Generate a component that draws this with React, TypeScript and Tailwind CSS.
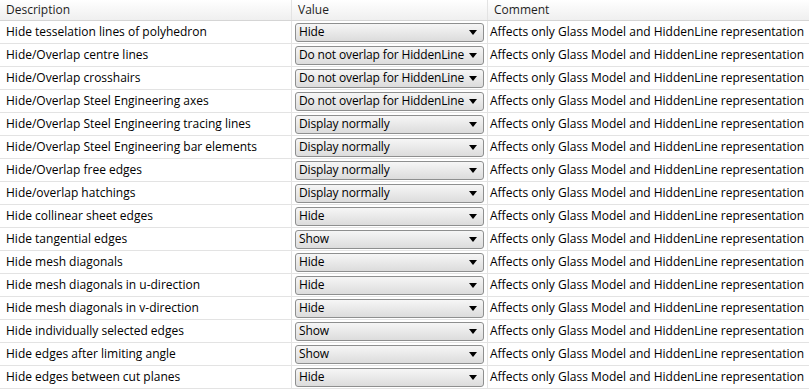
const rows: [string, string][] = [
  ["Hide tesselation lines of polyhedron", "Hide"],
  ["Hide/Overlap centre lines", "Do not overlap for HiddenLine"],
  ["Hide/Overlap crosshairs", "Do not overlap for HiddenLine"],
  ["Hide/Overlap Steel Engineering axes", "Do not overlap for HiddenLine"],
  ["Hide/Overlap Steel Engineering tracing lines", "Display normally"],
  ["Hide/Overlap Steel Engineering bar elements", "Display normally"],
  ["Hide/Overlap free edges", "Display normally"],
  ["Hide/overlap hatchings", "Display normally"],
  ["Hide collinear sheet edges", "Hide"],
  ["Hide tangential edges", "Show"],
  ["Hide mesh diagonals", "Hide"],
  ["Hide mesh diagonals in u-direction", "Hide"],
  ["Hide mesh diagonals in v-direction", "Hide"],
  ["Hide individually selected edges", "Show"],
  ["Hide edges after limiting angle", "Show"],
  ["Hide edges between cut planes", "Hide"],
];

const comment = "Affects only Glass Model and HiddenLine representation";

function Dropdown({ value }: { value: string }) {
  return (
    <div className="flex h-[19px] w-[189px] items-center justify-between rounded-[3px] border border-[#8e8f8f] bg-gradient-to-b from-[#f6f6f6] to-[#dcdcdc] pl-[3px] pr-[6px]">
      <span className="leading-none tracking-[-0.15px]">{value}</span>
      <svg width="8" height="5" viewBox="0 0 8 5" className="shrink-0">
        <path d="M0 0h8L4 5z" fill="#000" />
      </svg>
    </div>
  );
}

export default function App() {
  return (
    <div
      className="h-[389px] w-[809px] overflow-hidden bg-white text-[12px] text-black"
      style={{ fontFamily: '"Open Sans", "Noto Sans", sans-serif' }}
    >
      <div className="grid h-[21px] grid-cols-[292px_196px_1fr] border-b border-[#d5d5d5] bg-gradient-to-b from-white to-[#efefef] text-[#1e1e1e]">
        <div className="flex items-center border-r border-[#e3e3e3] pl-[6px]">Description</div>
        <div className="flex items-center border-r border-[#e3e3e3] pl-[6px]">Value</div>
        <div className="flex items-center pl-[6px]">Comment</div>
      </div>
      {rows.map(([desc, val]) => (
        <div key={desc} className="grid h-[23px] grid-cols-[292px_196px_1fr] border-b border-[#e3e3e3]">
          <div className="flex items-center border-r border-[#e3e3e3] pl-[6px]">{desc}</div>
          <div className="flex items-center border-r border-[#e3e3e3] pl-[3px]">
            <Dropdown value={val} />
          </div>
          <div className="flex items-center pl-[2px] whitespace-nowrap">{comment}</div>
        </div>
      ))}
    </div>
  );
}
